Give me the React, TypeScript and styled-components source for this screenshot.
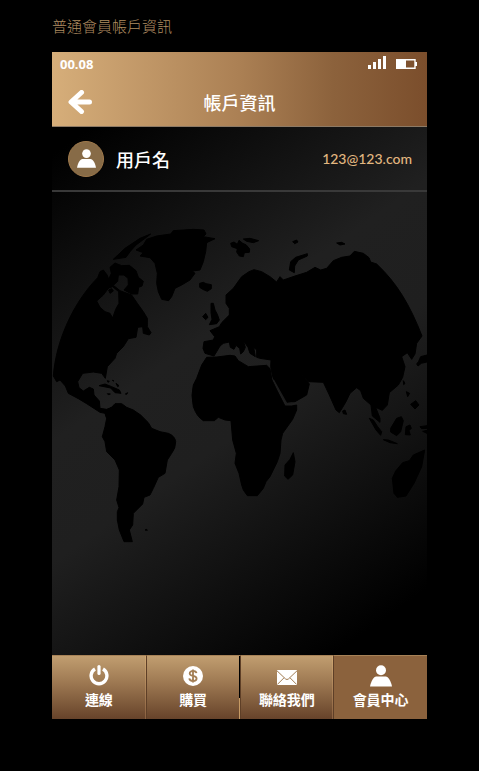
import React from "react";
import styled, { createGlobalStyle } from "styled-components";

const GlobalStyle = createGlobalStyle`
  * { box-sizing: border-box; }
  body {
    margin: 0;
    background: #000;
    font-family: "Noto Sans CJK TC", "Noto Sans", sans-serif;
  }
`;

const Page = styled.div`
  min-height: 100vh;
  padding: 0 52px 52px;
  background: #000;
`;

const Caption = styled.h1`
  margin: 0;
  height: 52px;
  font-size: 15px;
  font-weight: 300;
  line-height: 52px;
  color: #b08e62;
`;

const Screen = styled.main`
  display: flex;
  flex-direction: column;
  background: linear-gradient(145deg, #000 11%, #202020 42%, #1f1f1f 55%, #000 86%);
`;

const Header = styled.header`
  border-bottom: 1px solid #8d7a65;
  background: linear-gradient(90deg, #d6ae7a 0%, #ab8054 50%, #8c623c 75%, #7b4e2c 100%);
  color: #fff;
`;

const StatusBar = styled.div`
  display: flex;
  align-items: center;
  justify-content: space-between;
  height: 24px;
  padding: 0 9px 0 8px;
`;

const Clock = styled.time`
  font: 700 13px/24px "Noto Sans", sans-serif;
`;

const StatusIcons = styled.div`
  display: flex;
  align-items: flex-end;
  gap: 10px;
  padding-bottom: 3px;
  svg { display: block; }
`;

const TitleBar = styled.div`
  display: grid;
  grid-template-columns: 56px 1fr 56px;
  align-items: center;
  height: 50px;
  padding-top: 2px;
`;

const BackButton = styled.button`
  display: flex;
  justify-content: center;
  padding: 0;
  border: 0;
  background: none;
  cursor: pointer;
`;

const Title = styled.h2`
  margin: 0;
  font-size: 18px;
  font-weight: 500;
  line-height: 24px;
  text-align: center;
`;

const UserRow = styled.section`
  display: flex;
  align-items: center;
  gap: 12px;
  height: 65px;
  padding: 0 15px 0 16px;
  border-bottom: 2px solid #393939;
`;

const Avatar = styled.span`
  display: flex;
  align-items: center;
  justify-content: center;
  width: 36px;
  height: 36px;
  border: 1px solid #a07a4c;
  border-radius: 50%;
  background: #876b47;
`;

const UserName = styled.span`
  flex: 1;
  font-size: 18px;
  font-weight: 500;
  line-height: 24px;
  color: #fff;
`;

const Email = styled.a`
  font-family: Lato, "Noto Sans", sans-serif;
  font-size: 14px;
  font-weight: 500;
  line-height: 24px;
  color: #e2b780;
  text-decoration: none;
`;

const MapArea = styled.section`
  svg {
    display: block;
    width: 100%;
    height: auto;
  }
`;

const Nav = styled.nav`
  display: grid;
  grid-template-columns: repeat(4, 1fr);
`;

const edges = {
  plain: "linear-gradient(#d0a873, #8a6040)",
  split: "linear-gradient(#000 66%, #c69a64 66%)",
  none: "none",
};

const NavItem = styled.a<{ $active?: boolean; $edge: keyof typeof edges }>`
  display: flex;
  flex-direction: column;
  align-items: center;
  height: 64px;
  padding-top: 8px;
  border-top: 1px solid #a78257;
  background:
    ${(p) => edges[p.$edge]} right / 1px 100% no-repeat,
    ${(p) => (p.$active ? "linear-gradient(#8b623d, #8b623d)" : "linear-gradient(#c19e70, #9b7650 45%, #67432a)")};
  color: #fff;
  font-size: 14px;
  font-weight: 700;
  line-height: 22px;
  text-decoration: none;
  & + & { border-left: 1px solid #5e3f27; }
`;

const NavIcon = styled.span`
  display: flex;
  align-items: center;
  height: 24px;
`;

const Person = ({ size }: { size: number }) => (
  <svg width={size} height={size} viewBox="0 0 22 22" fill="#fff" aria-hidden="true">
    <circle cx="11" cy="5.3" r="5" />
    <path d="M0 21.6C1 16 3.8 11.5 6.2 11.5H15.8C18.2 11.5 21 16 22 21.6Z" />
  </svg>
);

const Power = () => (
  <svg width="20" height="22" viewBox="0 0 20 22" fill="none" stroke="#fff" strokeWidth="3.4" aria-hidden="true">
    <path d="M6 4A7.9 7.9 0 1 0 14 4" />
    <path d="M10 1.6V8.4" strokeLinecap="round" strokeWidth="3.2" />
  </svg>
);

const Dollar = () => (
  <svg width="20" height="20" viewBox="0 0 20 20" aria-hidden="true">
    <circle cx="10" cy="10" r="10" fill="#fff" />
    <path
      d="M13.5 7.2C13.2 5.6 11.8 5 10 5C8 5 6.7 5.9 6.7 7.4C6.7 10.8 13.6 8.9 13.6 12.5C13.6 14.1 12.1 15 10 15C8 15 6.5 14.1 6.3 12.4M10 3.4V16.6"
      fill="none"
      stroke="#a37e54"
      strokeWidth="1.8"
    />
  </svg>
);

const Mail = () => (
  <svg width="20" height="24" viewBox="0 0 20 24" aria-hidden="true">
    <path d="M0 6H20V21H0Z" fill="#fff" />
    <path d="M0 6.8L8.5 14.9Q10 16.2 11.5 14.9L20 6.8M.3 20.5L7 13.8M19.7 20.5L13 13.8" fill="none" stroke="#a17c53" />
  </svg>
);

const WorldMap = () => (
  <svg viewBox="6 -84 1125 1389" fill="#000" stroke="#000" strokeWidth="3" strokeLinejoin="round" role="img" aria-label="世界地圖">
    {/* North America, with the Hudson Bay cut out */}
    <path
      fillRule="evenodd"
      d="M10 468C18 360 72 245 143 173L150 155L160 150L172 166L176 178L184 160L180 142L195 129L215 137L238 136L258 152L265 172L280 184L276 198L266 202L263 222L245 222L222 210L235 195L234 175L222 165L205 165L203 184L190 196L210 212L245 225L262 250L280 275L292 295L292 320L303 338L298 345L280 340L278 320L263 322L258 352L235 356L220 380L200 400L195 415L172 440L166 475L155 460L130 456L98 460L83 485L87 503L100 513L118 502L130 507L132 525L148 543L150 565L170 568L185 562L170 595L165 580L150 577L110 551L85 536L55 520L46 498L30 480L20 485ZM140 243L160 225L176 204L188 200L206 215L207 250L197 268L188 294L180 280L165 275L150 262Z"
    />
    <path d="M176 210L185 206L190 213L180 220ZM190 118L225 85L270 55L302 42L285 55L258 75L240 95L228 112Z" />
    {/* Greenland */}
    <path d="M258 90L280 75L290 58L320 48L362 42L370 32L430 28L462 30L468 42L460 50L495 56L470 68L467 95L460 125L450 150L427 153L435 160L420 180L395 195L375 205L365 230L356 242L335 238L325 215L320 190L322 160L315 130L300 113L270 108L280 98Z" />
    {/* Caribbean islands */}
    <path d="M147 497L165 492L185 500L208 510L213 520L195 518L182 504ZM172 521L181 522L175 524ZM226 522L233 518L230 523ZM172 482L178 484L174 487ZM187 481L192 483ZM198 490L207 497L203 500Z" />
    {/* South America */}
    <path d="M165 575L185 562L195 551L215 551L230 562L250 570L272 585L295 608L305 625L330 635L355 640Q375 648 377 665Q377 685 365 700L352 720L345 760L325 772L310 805L300 825L282 832L278 852L250 880L248 915L238 930L247 965H222L208 930L202 900V875L207 863L200 840L207 800L208 750L195 720L170 695L165 665L157 650L165 620L170 595ZM285 930L290 928L292 931Z" />
    {/* Europe and Asia */}
    <path d="M528 225L550 205L575 170L597 155L612 149L635 155L660 170L680 186L690 170L700 180L735 168L770 157L795 142L812 150L830 145L850 122L875 112L900 108L913 94L940 100L957 113L962 126L980 132C1040 188 1080 255 1116 348L1100 370L1095 402L1085 418L1072 398L1055 410L1065 440L1058 472L1045 495L1018 518L1012 555L997 571L977 562L990 595V607L967 588L963 555L940 535L932 512L920 503L900 520L888 545L878 562L868 578L858 570L838 525L820 487L776 485L750 455L778 492L770 525L735 545L710 547L685 505L668 470L662 440L663 420L630 415L620 412V390L611 382L616 410L600 400L594 382L580 362L586 382L580 395L572 402L569 385L558 376L552 388L541 382L538 366L520 370L510 378L500 395L492 408L465 400L459 385L462 365L490 360L494 350L480 332L508 320L515 308L538 285V265L528 250Z" />
    {/* British Isles, Iceland and the Arctic islands */}
    <path d="M483 250L490 250L495 270L502 283L508 300L500 311L478 314L486 298L483 278ZM458 290L467 280L474 292L467 299ZM449 190L460 187L468 191L484 194V206L472 214L458 208L449 202ZM542 70L552 66L562 73L567 61L578 70L588 74L599 87L598 97L583 98L580 110L568 108L560 96L562 86L545 80ZM580 57L600 55L626 62L610 68L590 64ZM728 65L740 60L744 66L734 71ZM718 150L722 125L737 112L772 101V108L745 120L734 138L733 158ZM860 69L875 67L885 72L870 75Z" />
    {/* Africa and Madagascar */}
    <path d="M470 412L500 411L540 406L555 408L565 422L595 440L650 436L660 446L666 480L682 513L705 558L725 558L740 555V570L728 598L698 640L693 660L690 700L682 725L660 770L648 785L640 805L622 827H592L580 810L575 795L567 760L555 730L559 700L548 660L543 602L525 600L505 592L493 602H460Q440 590 430 560Q422 525 430 495L440 475L455 435ZM730 698L735 725L728 765L714 778L704 768L705 735L720 718Z" />
    {/* Japan, South-East Asia and Australia */}
    <path d="M1131 405L1112 410L1106 424L1100 432L1104 438L1114 430L1131 426ZM1060 482L1065 490L1061 494ZM1069 515L1079 520L1073 530ZM1082 553L1097 542L1107 555L1095 567ZM958 595L970 600L983 620L995 635L992 646L978 630ZM1000 659L1015 660L1042 671L1020 668ZM1022 625L1040 595L1054 590L1060 602L1052 635L1040 647L1022 636ZM1068 620L1080 615L1084 625L1077 632L1081 645L1066 644ZM1110 620L1131 617V625L1115 626ZM1118 634L1131 631V640ZM878 573L885 570L890 583L880 581ZM1124 690L1115 740L1092 790L1068 828L1042 832L1032 820L1027 775L1037 753L1058 728L1078 722L1090 705Z" />
    {/* Red Sea */}
    <path d="M671 481L686 508L710 551L728 549" fill="none" stroke="#1c1c1c" strokeWidth="4" />
  </svg>
);

const navItems = [
  { label: "連線", icon: <Power />, edge: "plain" },
  { label: "購買", icon: <Dollar />, edge: "split" },
  { label: "聯絡我們", icon: <Mail />, edge: "plain" },
  { label: "會員中心", icon: <Person size={22} />, edge: "none", active: true },
] as const;

export default function App() {
  return (
    <Page>
      <GlobalStyle />
      <Caption>普通會員帳戶資訊</Caption>
      <Screen>
        <Header>
          <StatusBar>
            <Clock>00.08</Clock>
            <StatusIcons>
              <svg width="18" height="13" viewBox="0 0 18 13" fill="#fff" aria-hidden="true">
                <path d="M0 9H3V13H0ZM5 6H8V13H5ZM10 3H13V13H10ZM15 0H18V13H15Z" />
              </svg>
              <svg width="22" height="10" viewBox="0 0 22 10" aria-hidden="true">
                <path d="M.7 .7H19V9.3H.7Z" fill="none" stroke="#fff" strokeWidth="1.4" />
                <path d="M0 0H10V10H0ZM19 3H21V7H19Z" fill="#fff" />
              </svg>
            </StatusIcons>
          </StatusBar>
          <TitleBar>
            <BackButton aria-label="返回">
              <svg width="24" height="24" viewBox="0 0 24 24" fill="none" stroke="#fff" strokeWidth="5" strokeLinecap="round" strokeLinejoin="round">
                <path d="M13.5 2.5L3 12L13.5 21.5M4 12H21.5" />
              </svg>
            </BackButton>
            <Title>帳戶資訊</Title>
          </TitleBar>
        </Header>
        <UserRow>
          <Avatar><Person size={19} /></Avatar>
          <UserName>用戶名</UserName>
          <Email href="mailto:123@123.com">123@123.com</Email>
        </UserRow>
        <MapArea><WorldMap /></MapArea>
        <Nav>
          {navItems.map((item) => (
            <NavItem key={item.label} href="#" $edge={item.edge} $active={"active" in item}>
              <NavIcon>{item.icon}</NavIcon>
              {item.label}
            </NavItem>
          ))}
        </Nav>
      </Screen>
    </Page>
  );
}
